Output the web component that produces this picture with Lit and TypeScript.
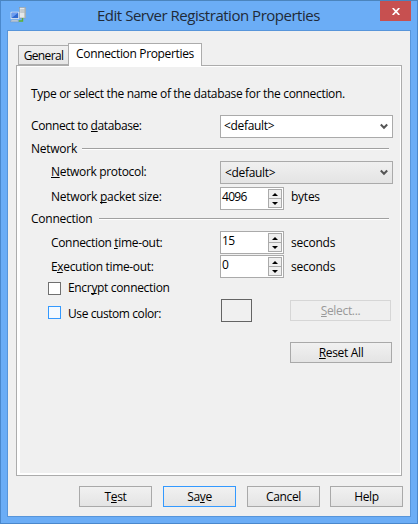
import { LitElement, html, css, svg } from "lit";
import { customElement, property } from "lit/decorators.js";

/** Renders a caption; the letter after "&" is the underlined access key. */
function caption(text: string) {
  const i = text.indexOf("&");
  if (i < 0) return html`${text}`;
  return html`${text.slice(0, i)}<u>${text[i + 1]}</u>${text.slice(i + 2)}`;
}

const underline = css`
  u {
    text-decoration: none;
    background: linear-gradient(currentColor, currentColor) 0 calc(100% - 2px) / calc(100% - 0.3px) 1px no-repeat;
  }
`;

@customElement("push-button")
export class PushButton extends LitElement {
  @property() label = "";
  @property() kind = "";
  static styles = [
    underline,
    css`
      :host { display: block; width: 73px; height: 21px; }
      .btn {
        box-sizing: border-box; width: 100%; height: 100%;
        border: 1px solid #a9a9a9; padding: 0 0 1px;
        background: linear-gradient(#f1f1f1, #e4e4e4);
        font: inherit; letter-spacing: inherit; color: #000;
        display: flex; align-items: center; justify-content: center;
        white-space: pre; line-height: 17px;
      }
      .default { border-color: #3399ff; }
      .disabled { border-color: #d6d6d6; background: #efefef; color: #999; }
    `,
  ];
  render() {
    return html`<button class="btn ${this.kind}" ?disabled=${this.kind === "disabled"}><span>${caption(this.label)}</span></button>`;
  }
}

@customElement("combo-box")
export class ComboBox extends LitElement {
  @property() value = "";
  @property() kind = "";
  static styles = css`
    :host { display: block; width: 173px; height: 23px; }
    .box {
      box-sizing: border-box; height: 100%; border: 1px solid #aaa; background: #fff;
      display: flex; align-items: center; justify-content: space-between; padding: 0 4px 1px 3px;
    }
    .text { margin-top: -1px; }
    .list { background: linear-gradient(#f0f0f0, #e4e4e4); padding-left: 4px; }
    .list .text { margin-top: 1px; }
    svg { display: block; }
  `;
  render() {
    return html`<div class="box ${this.kind}">
      <span class="text">${this.value}</span>
      <svg width="8" height="7" viewBox="0 0 8 7"><path d="M.8 1.5 4 4.8 7.2 1.5" fill="none" stroke="#555" stroke-width="2" /></svg>
    </div>`;
  }
}

@customElement("number-spinner")
export class NumberSpinner extends LitElement {
  @property() value = "";
  static styles = css`
    :host { display: block; width: 64px; height: 23px; }
    .box {
      box-sizing: border-box; height: 100%; border: 1px solid #aaa; background: #fff;
      display: flex; justify-content: space-between; padding: 1px;
    }
    .num { line-height: 15px; letter-spacing: -0.7px; }
    .arrows { display: flex; flex-direction: column; width: 14px; height: 19px; }
    .arrow {
      box-sizing: border-box; height: 10px; border: 1px solid #aaa; background: #efefef;
      display: flex; align-items: center; justify-content: center;
    }
    .arrow + .arrow { margin-top: -1px; }
    svg { display: block; }
  `;
  render() {
    return html`<div class="box">
      <span class="num">${this.value}</span>
      <div class="arrows">
        <div class="arrow"><svg width="6" height="3"><path d="M0 3 3 0 6 3Z" /></svg></div>
        <div class="arrow"><svg width="6" height="3"><path d="M0 0 3 3 6 0Z" /></svg></div>
      </div>
    </div>`;
  }
}

const serverIcon = svg`
  <rect x="9.5" y=".4" width="6" height="10.6" fill="#e4e8ea" stroke="#8e989e" stroke-width=".6" />
  <path d="M10.2 3h4.6M10.2 5h4.6" stroke="#8b979f" stroke-width=".7" />
  <rect x="14.4" y=".8" width="1.1" height="10" fill="#a9b0b2" />
  <rect x=".6" y="4.8" width="8.6" height="7.4" rx=".8" fill="#dce6f2" />
  <rect x="1.6" y="5.7" width="6.6" height="5.4" fill="#2e69d0" />
  <path d="M1.6 5.7h6.6L1.6 11.1Z" fill="#6c9df0" />
  <path d="M1.4 13.1h6.6l1 1.7H.4Z" fill="#d5dde5" stroke="#718aa8" stroke-width=".5" />
  <path d="M12.5 11v3H8.8" fill="none" stroke="#5fb030" stroke-width="1.4" />`;

@customElement("app-root")
export class AppRoot extends LitElement {
  static styles = [
    underline,
    css`
      :host {
        display: block; width: 418px; height: 524px;
        font: 12px/17px "Open Sans", "Noto Sans", sans-serif;
        letter-spacing: -0.33px; color: #000;
      }
      .window {
        box-sizing: border-box; width: 418px; height: 524px;
        border: 1px solid #4a88cc; border-top-color: #4b84bd; background: #6badf6;
        padding: 0 6px 6px; display: flex; flex-direction: column;
      }
      .titlebar { height: 29px; display: grid; grid-template-columns: 90px 1fr 31px; }
      .icon { margin: 6px 0 0 3px; }
      .title { font-size: 15px; line-height: 29px; letter-spacing: -0.48px; color: #1f2a38; white-space: pre; }
      .close { height: 20px; background: #c75050; display: flex; align-items: center; justify-content: center; }
      .client {
        box-sizing: border-box; flex: 1; border: 1px solid #5795da; background: #f0f0f0;
        padding: 12px 0 0 8px; display: flex; flex-direction: column;
      }
      .tabs { display: flex; align-items: flex-end; height: 23px; margin-bottom: -1px; padding-left: 2px; z-index: 1; }
      .tab {
        box-sizing: border-box; height: 20px; width: 51px; border: 1px solid #acacac; margin: 0 -1px 1px 0;
        background: linear-gradient(#f0f0f0, #e6e6e6); text-align: center; line-height: 19px;
        letter-spacing: -0.65px; white-space: pre;
      }
      .active { width: 134px; height: 23px; margin-bottom: 0; background: #fff; border-bottom: 0; letter-spacing: -0.34px; }
      .panel {
        box-sizing: border-box; width: 386px; height: 411px; border: 1px solid #acacac;
        background: #fff; padding: 1px 1px 2px 3px;
      }
      .page { box-sizing: border-box; height: 100%; background: #f0f0f0; padding: 18px 8px 0 11px; display: flex; flex-direction: column; }
      .intro { height: 17px; margin-bottom: 13px; white-space: pre; }
      .row { display: grid; grid-template-columns: 189px 64px 6px 1fr; height: 23px; align-items: center; white-space: pre; }
      .row > span { padding-bottom: 2px; }
      .conn > span { padding-bottom: 0; }
      .packet > span { padding-bottom: 4px; }
      .wide { grid-column: 2 / 5; }
      .unit { grid-column: 4; padding-left: 1px; letter-spacing: -0.25px; }
      .indent { padding-left: 20px; }
      .tight { letter-spacing: -0.4px; }
      .loose { letter-spacing: -0.24px; }
      .group { display: grid; grid-template-columns: 51px 1fr; height: 23px; margin-right: 3px; letter-spacing: -0.25px; line-height: 21px; }
      .group::after { content: ""; height: 1px; margin-top: 10px; background: #a0a0a0; border-bottom: 1px solid #fff; }
      .second { grid-template-columns: 68px 1fr; height: 21px; line-height: 17px; }
      .second::after { margin-top: 8px; }
      .gap { margin-top: 3px; }
      .next { margin-top: 1px; }
      .check { display: flex; align-items: center; gap: 7px; padding-left: 17px; }
      .tick { box-sizing: border-box; width: 13px; height: 13px; border: 1px solid #707070; background: #fff; }
      .hot { border-color: #3399ff; background: #f3f9ff; }
      .encrypt { height: 17px; margin: 2px 0; }
      .encrypt .name { padding-bottom: 2px; }
      .color { padding-top: 4px; letter-spacing: -0.42px; }
      .color .name { padding-top: 2px; }
      .swatch { box-sizing: border-box; width: 31px; height: 23px; border: 1px solid #646464; margin-left: 1px; }
      .reset { width: 102px; align-self: flex-end; margin-top: 20px; }
      .select { grid-column: 4; width: 101px; }
      .footer { display: flex; justify-content: flex-end; gap: 11px; margin-top: 10px; padding-right: 7px; }
      .last { margin-left: -1px; }
    `,
  ];

  render() {
    return html`<div class="window">
      <div class="titlebar">
        <svg class="icon" width="16" height="16" viewBox="0 0 16 16">${serverIcon}</svg>
        <div class="title">Edit Server Registration Properties</div>
        <div class="close"><svg width="8" height="7" viewBox="0 0 8 7"><path d="M.7 0 7.3 7M7.3 0 .7 7" stroke="#fff" stroke-width="1.7" /></svg></div>
      </div>
      <div class="client">
        <div class="tabs">
          <div class="tab">General</div>
          <div class="tab active">Connection Properties</div>
        </div>
        <div class="panel"><div class="page">
          <div class="intro">Type or select the name of the database for the connection.</div>
          <div class="row"><span class="tight">${caption("Connect to &database:")}</span><combo-box class="wide" value="<default>"></combo-box></div>
          <div class="group">Network</div>
          <div class="row"><span class="indent">${caption("&Network protocol:")}</span><combo-box class="wide" kind="list" value="<default>"></combo-box></div>
          <div class="row gap packet"><span class="indent loose">${caption("Network &packet size:")}</span><number-spinner value="4096"></number-spinner><span class="unit">bytes</span></div>
          <div class="group second">Connection</div>
          <div class="row conn"><span class="indent">${caption("Connection &time-out:")}</span><number-spinner value="15"></number-spinner><span class="unit">seconds</span></div>
          <div class="row conn next"><span class="indent">${caption("E&xecution time-out:")}</span><number-spinner value="0"></number-spinner><span class="unit">seconds</span></div>
          <div class="check encrypt"><span class="tick"></span><span class="name">${caption("Encr&ypt connection")}</span></div>
          <div class="row"><div class="check color"><span class="tick hot"></span><span class="name">Use custom color:</span></div>
            <div class="swatch"></div><push-button class="select" kind="disabled" label="&Select..."></push-button></div>
          <push-button class="reset" label="&Reset All"></push-button>
        </div></div>
        <div class="footer">
          <push-button label="T&est"></push-button>
          <push-button kind="default" label="Sa&ve"></push-button>
          <push-button label="Cancel"></push-button>
          <push-button class="last" label="Help"></push-button>
        </div>
      </div>
    </div>`;
  }
}
